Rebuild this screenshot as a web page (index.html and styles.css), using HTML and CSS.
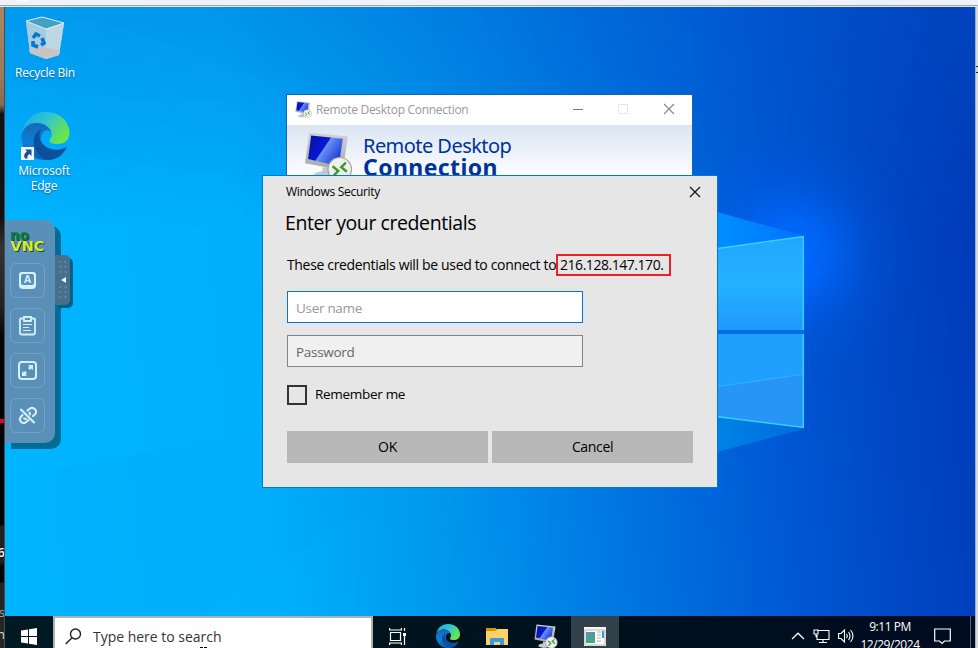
FILE: index.html
```html
<!DOCTYPE html>
<html lang="en">
<head>
<meta charset="utf-8">
<title>Remote desktop</title>
<link rel="stylesheet" href="styles.css">
</head>
<body>
<svg width="0" height="0" class="defs">
  <defs>
    <linearGradient id="edgeBlue" x1="0" y1="0" x2="0" y2="1"><stop offset="0" stop-color="#1767b5"/><stop offset=".5" stop-color="#0b80d8"/><stop offset="1" stop-color="#095fae"/></linearGradient>
    <linearGradient id="edgeTop" x1="0" y1="0" x2="1" y2=".5"><stop offset="0" stop-color="#1aa7e8"/><stop offset=".5" stop-color="#2fc5d4"/><stop offset="1" stop-color="#6be44a"/></linearGradient>
    <linearGradient id="screen" x1="0" y1="0" x2="1" y2=".6"><stop offset="0" stop-color="#0910a0"/><stop offset=".5" stop-color="#0618d4"/><stop offset=".53" stop-color="#6c90f4"/><stop offset="1" stop-color="#1838d8"/></linearGradient>
    <linearGradient id="metal" x1="0" y1="0" x2="0" y2="1"><stop offset="0" stop-color="#d0d4d6"/><stop offset="1" stop-color="#a4a8ab"/></linearGradient>
    <symbol id="edge" viewBox="0 0 48 48">
      <path d="M1 21C2 8 12 0 24 0C38 0 48 9 48 21C48 29 42 32 36 32C31 32 28 31 28 29C28 27 31 25 30 21C28 14 21 11 15 11C8 11 2 16 1 21Z" fill="url(#edgeTop)"/>
      <path d="M0 23C2 15 8 11 15 11C22 11 29 15 30 21C29 18 25 17 22 20C17 26 20 36 30 42C34 44 39 44 42 41C37 46 31 48 24 48C10 48-1 37 0 23Z" fill="url(#edgeBlue)"/>
      <path d="M20 17C11 21 9 34 18 43C21 46 25 48 28 48C36 47 42 42 45 36C45 35 44 35 43 36C33 41 19 35 18 25C18 22 18 20 20 17Z" fill="#0c509d"/>
    </symbol>
    <symbol id="rdp" viewBox="0 0 48 48">
      <path d="M18 34L30 34L32 43Q22 50 9 44Q8 39 18 38Z" fill="#c3c8cb"/>
      <path d="M5 0L43 4L38 37L1 30Z" fill="url(#metal)"/>
      <path d="M7 3L38 6L34 33L4 26Z" fill="url(#screen)"/>
      <circle cx="35" cy="36" r="11.5" fill="#eff0ee" stroke="#a2a5a3" stroke-width="1.2"/>
      <path d="M28 33L33.500 37.500L29 42.500M41 29.500L36.500 34L42 38.500" fill="none" stroke="#3a9b28" stroke-width="2.4"/>
    </symbol>
  </defs>
</svg>
<div class="frame">
  <div class="top-strip"><span class="pill"></span></div>
  <div class="left-strip"><i class="mark"></i><span class="l1">6</span><span class="l2">s</span><span class="l3">n</span></div>
  <main class="desktop">
    <svg class="wallpaper" viewBox="5 7 970 641" width="970" height="641" preserveAspectRatio="none">
      <defs>
        <linearGradient id="base" gradientUnits="userSpaceOnUse" x1="5" y1="330" x2="975" y2="240">
          <stop offset="0" stop-color="#00b5ff"/><stop offset=".25" stop-color="#00b0fd"/><stop offset=".45" stop-color="#0094ed"/><stop offset=".62" stop-color="#0074e0"/><stop offset=".78" stop-color="#0058d5"/><stop offset=".9" stop-color="#0047c4"/><stop offset="1" stop-color="#003bb8"/>
        </linearGradient>
        <linearGradient id="shade" gradientUnits="userSpaceOnUse" x1="0" y1="7" x2="0" y2="230"><stop offset="0" stop-color="#0058c8" stop-opacity=".3"/><stop offset="1" stop-color="#0058c8" stop-opacity="0"/></linearGradient>
        <radialGradient id="glow" gradientUnits="userSpaceOnUse" cx="790" cy="255" r="125"><stop offset="0" stop-color="#006dff"/><stop offset=".3" stop-color="#0066fa" stop-opacity=".8"/><stop offset=".65" stop-color="#005eea" stop-opacity=".25"/><stop offset="1" stop-color="#0058e0" stop-opacity="0"/></radialGradient>
        <linearGradient id="pane1" x1="0" y1="0" x2="0" y2="1"><stop offset="0" stop-color="#22a6ff"/><stop offset=".52" stop-color="#23b2ff"/><stop offset="1" stop-color="#1e98fc"/></linearGradient>
        <linearGradient id="beam" gradientUnits="userSpaceOnUse" x1="710" y1="0" x2="804" y2="0"><stop offset="0" stop-color="#0090ff"/><stop offset="1" stop-color="#0074ff"/></linearGradient>
        <linearGradient id="beam2" gradientUnits="userSpaceOnUse" x1="710" y1="0" x2="804" y2="0"><stop offset="0" stop-color="#0084e6"/><stop offset="1" stop-color="#006ade"/></linearGradient>
      </defs>
      <rect x="5" y="7" width="970" height="641" fill="url(#base)"/>
      <rect x="5" y="7" width="970" height="223" fill="url(#shade)"/>
      <path d="M5 7L60 7L310 96L640 176L300 176Z" fill="#13a3f7" opacity=".12"/>
      <path d="M5 480L263 430V488L400 488L200 616H5Z" fill="#0097e2" opacity=".07"/>
      <circle cx="790" cy="255" r="125" fill="url(#glow)"/>
      <path d="M600 176L717 212L804 236L717 249L600 270Z" fill="url(#beam)"/>
      <path d="M650 400L717 416L804 429L717 452L650 475Z" fill="url(#beam2)"/>
      <path d="M700 251L804 236V330H700Z" fill="url(#pane1)"/>
      <path d="M700 330H804V334H700Z" fill="#006fe6"/>
      <path d="M700 334H804V428L700 414Z" fill="#219fff"/>
      <path d="M700 389L804 374V428L700 414Z" fill="#2695f5"/>
      <path d="M700 389L804 374" stroke="#28b5ff" stroke-width="1.2"/>
      <path d="M700 251L803.3 236.5V330M803.3 334V427.5L700 414.5" fill="none" stroke="#37d0fa" stroke-width="1.5"/>
    </svg>

    <div class="shortcut bin">
      <svg width="40" height="44" viewBox="0 0 40 44">
        <path d="M1 5L17 1L39 7L34 39L21 43L5 37Z" fill="#a9d2e6" opacity=".95"/>
        <path d="M1 5L17 1L39 7L21 13Z" fill="#449fc5"/>
        <path d="M1 5L21 13L21 43L5 37Z" fill="#a3cce2"/>
        <path d="M21 13L39 7L34 39L21 43Z" fill="#bcd8e5"/>
        <path d="M4 34L17 31L35 34L34 39L21 43L5 37Z" fill="#c9c4c3"/>
        <path d="M1 5L21 13L39 7L17 1Z" fill="none" stroke="#d7edf4"/>
        <path d="M8 22L11 18L15 20M17 22L19 27L16 29M13 31L8 29L8 25" fill="none" stroke="#0876cf" stroke-width="3.6"/>
      </svg>
      <span>Recycle Bin</span>
    </div>
    <div class="shortcut edge">
      <div class="edge-art">
        <svg width="49" height="48"><use href="#edge" width="49" height="48"/></svg>
        <svg class="arrow" width="13" height="13" viewBox="0 0 13 13"><path d="M0 0H13V13H0Z" fill="#f4f4f4"/><path d="M4 2.500H10.500V9L8.500 7Q6 8 6.500 11.500H4Q1.500 7.500 6 4.500Z" fill="#1b4f93"/></svg>
      </div>
      <span>Microsoft<br>Edge</span>
    </div>

    <section class="rdc">
      <header>
        <svg width="17" height="17"><use href="#rdp" width="17" height="17"/></svg>
        <span class="rdc-title">Remote Desktop Connection</span>
        <svg class="controls" width="104" height="14" viewBox="0 0 104 14" fill="none"><path d="M1 7.500H11" stroke="#777"/><path d="M46.500 2.500H55.500V11.500H46.500Z" stroke="#e6e6e6"/><path d="M92 2L102 12M102 2L92 12" stroke="#858585" stroke-width="1.1"/></svg>
      </header>
      <div class="banner">
        <svg width="49" height="50"><use href="#rdp" width="49" height="50"/></svg>
        <div class="brand"><span>Remote Desktop</span><strong>Connection</strong></div>
      </div>
    </section>

    <section class="dialog">
      <header><span class="dlg-title">Windows Security</span><svg width="12" height="12" viewBox="0 0 12 12"><path d="M1 1L11 11M11 1L1 11" stroke="#111" stroke-width="1.2"/></svg></header>
      <h1>Enter your credentials</h1>
      <p><span class="msg">These credentials will be used to connect to</span><span class="ip">216.128.147.170.</span></p>
      <div class="field user"><span>User name</span></div>
      <div class="field pass"><span>Password</span></div>
      <label class="remember"><i></i><span>Remember me</span></label>
      <div class="buttons"><button>OK</button><button>Cancel</button></div>
    </section>

    <aside class="vnc">
      <svg class="logo" width="37" height="25" viewBox="0 0 37 25">
        <text class="no" x="0" y="9.500" textLength="19" lengthAdjust="spacingAndGlyphs">no</text>
        <text class="name" x="0.500" y="21" textLength="34" lengthAdjust="spacingAndGlyphs">VNC</text>
      </svg>
      <div class="tool"><svg width="19" height="19" viewBox="0 0 19 19"><path d="M4 1H15Q18 1 18 4V14Q18 18 14 18H5Q1 18 1 14V4Q1 1 4 1ZM5 3Q3 3 3 5V12Q3 14 5 14H14Q16 14 16 12V5Q16 3 14 3Z" fill="#d4f0ff" fill-rule="evenodd"/><text x="9.500" y="12.200" text-anchor="middle" font-family="Liberation Sans" font-weight="bold" font-size="10.500" fill="#d4f0ff">A</text></svg></div>
      <div class="tool"><svg width="19" height="21" viewBox="0 0 19 21" fill="none" stroke="#d4f0ff"><path d="M6 3.500H3Q2 3.500 2 4.500V18Q2 19.500 3.500 19.500H15.500Q17 19.500 17 18V4.500Q17 3.500 16 3.500H13" stroke-width="1.8"/><path d="M6 2H13V6H6Z" stroke-width="1.8"/><path d="M5 9.500H14M5 12.500H11M5 15.500H13"/></svg></div>
      <div class="tool"><svg width="19" height="19" viewBox="0 0 19 19" fill="none" stroke="#d4f0ff"><rect x="1" y="1" width="17" height="17" rx="3" stroke-width="2"/><path d="M10 4H15V9L13.500 7.500L12 9L10 7L11.500 5.500ZM4 10L5.500 11.500L7 10L9 12L7.500 13.500L9 15H4Z" fill="#d4f0ff" stroke="none"/></svg></div>
      <div class="tool"><svg width="20" height="20" viewBox="0 0 20 20" fill="none" stroke="#d4f0ff" stroke-width="2.100" stroke-linecap="round"><path d="M3 3.500L16 16.500"/><path d="M9.500 4.500L12 2.500Q14.500.8 17 3.200Q19.300 5.800 17 8.200L15 10M12 8.500L11.500 6.500M4.500 9L2.800 11Q.8 13.500 3.200 16Q5.800 18.200 8.200 16L10.500 14M6 12.500L8 13"/></svg></div>
      <div class="handle"><svg width="15" height="50" viewBox="0 0 15 50"><path d="M5.500 6V46M10.500 6V46" stroke="#65869f" stroke-width="2" stroke-dasharray="2 3"/><path d="M4 20H13V30H4Z" fill="#47708c"/><path d="M6 25L11 22V28Z" fill="#e2f4ff"/></svg></div>
    </aside>

    <nav class="taskbar">
      <div class="start"><svg width="17" height="17" viewBox="0 0 17 17" fill="#fff"><path d="M0 2.500L7 1.500V8H0ZM8 1.300L16 0V8H8ZM0 9H7V15.500L0 14.500ZM8 9H16V17L8 15.700Z"/></svg></div>
      <div class="search"><svg width="17" height="17" viewBox="0 0 17 17" fill="none" stroke="#222" stroke-width="1.400"><circle cx="10.500" cy="6" r="5"/><path d="M7 9.700L.7 16"/></svg><span>Type here to search</span><i class="caret"></i></div>
      <div class="task view"><svg width="17" height="17" viewBox="0 0 17 17" fill="none" stroke="#fff" stroke-width="1.200"><path d="M1.500 4.500H11.500V12.500H1.500ZM.6 0V2H12.400V0M.6 17V15H12.400V17M15.500 0V3M15.500 8V17"/><path d="M14 5H17V8H14Z" fill="#fff" stroke="none"/></svg></div>
      <div class="task"><svg width="24" height="24"><use href="#edge" width="24" height="24"/></svg></div>
      <div class="task files"><svg width="22" height="19" viewBox="0 0 22 19"><path d="M0 1H10L11 4H0Z" fill="#d99600"/><path d="M0 4H9L11 2H22V18H0Z" fill="#ffd165"/><path d="M4 18V12Q4 11 5 11H17Q18 11 18 12V18H14V15H8V18Z" fill="#3b99df"/></svg></div>
      <div class="task remote"><svg width="24" height="25"><use href="#rdp" width="24" height="25"/></svg></div>
      <div class="task active"><svg width="22" height="19" viewBox="0 0 22 19"><path d="M0 0H22V19H0Z" fill="#f5f5f4"/><path d="M1 3H21V18H1Z" fill="#fff" stroke="#b5b8ba"/><path d="M2 5H11V16H2Z" fill="#4aa587"/><path d="M2 5H11V9Q7 9 2 14Z" fill="#5399a8"/><path d="M13 5H17M13 8H17M13 11H17M13 14H17" stroke="#c8caca" stroke-width="1.500"/><path d="M19 4V11" stroke="#278ad2" stroke-width="1.800"/></svg></div>
      <div class="tray">
        <svg width="14" height="8" viewBox="0 0 14 8"><path d="M1 7L7 1.200L13 7" fill="none" stroke="#fff" stroke-width="1.300"/></svg>
        <svg class="net" width="17" height="15" viewBox="0 0 17 15" fill="none" stroke="#fff" stroke-width="1.100"><path d="M5 1.500H16V10.500H4V6M10 10.500V13.500M6 13.500H14M1 1H5V5H1ZM3 5V8"/></svg>
        <svg class="sound" width="17" height="14" viewBox="0 0 17 14" fill="none" stroke="#fff" stroke-width="1.100"><path d="M.6 4.500H3L6.500 1V13L3 9.500H.6ZM8.500 5Q10 7 8.500 9M10.500 3Q13.500 7 10.500 11M12.500 1Q17.500 7 12.500 13"/></svg>
        <div class="clock"><span>9:11 PM</span><span class="date">12/29/2024</span></div>
        <svg class="note" width="17" height="17" viewBox="0 0 17 17" fill="none" stroke="#fff" stroke-width="1.200"><path d="M.7 1H16.300V13H10.500L8 15.500L5.500 13H.7Z"/></svg>
        <i class="peek"></i>
      </div>
    </nav>
  </main>
  <div class="right-strip"><span class="r1">c</span></div>
</div>
</body>
</html>
```
FILE: styles.css
```css
* { box-sizing: border-box; }
body { margin: 0; overflow: hidden; font-family: "Open Sans", "Noto Sans", sans-serif; font-size: 14px; color: #000; }
svg { display: block; flex: none; }
.defs { position: absolute; }
i { display: block; }
.frame { width: 978px; height: 648px; display: grid; grid-template: 7px 641px / 5px 970px 3px; overflow: hidden; }
.top-strip { grid-column: 1 / -1; background: #edf2fb; border-bottom: 1px solid #dde6ee; box-shadow: inset 0 -1px #a7a7a9; }
.pill { display: block; width: 10px; height: 1px; margin-left: 17px; background: #fff; }
.left-strip { position: relative; overflow: hidden; background: linear-gradient(#a98762 0, #9c7a58 70px, #8b6a4d 98px, #111 107px, #111 210px, #333 240px, #222 300px, #050505 330px, #030303 518px, #202020 519px, #202020 555px, #050505 560px, #050505 575px, #252525 576px); border-right: 1px solid #4a4a4a; color: #aaa; font-size: 13px; line-height: 16px; }
.left-strip span { position: absolute; right: -1px; }
.left-strip .l1 { top: 537px; color: #eee; font-weight: 600; }
.l2 { top: 597px; }
.l3 { top: 619px; color: #ddd; }
.mark { height: 4px; margin-top: 412px; background: #e8002c; }
.right-strip { overflow: hidden; background: #d6d7d9; border-left: 1px solid #9bb0d8; }
.r1 { display: block; margin: 52px 0 0 -3px; font-size: 13px; color: #222; }
.desktop { position: relative; overflow: hidden; }
.wallpaper { position: absolute; inset: 0; }

.shortcut { position: absolute; display: flex; flex-direction: column; align-items: center; width: 76px; color: #fff; font-size: 12px; line-height: 15px; text-align: center; text-shadow: 0 1px 2px #0a5c9a; }
.bin { left: 2px; top: 9px; }
.bin span { margin-top: 5px; letter-spacing: -.25px; }
.edge { left: 1px; top: 105px; }
.edge span { margin-top: 3px; letter-spacing: -.15px; }
.edge-art { position: relative; margin-left: 3px; }
.arrow { position: absolute; left: 0; bottom: 0; }

.rdc { position: absolute; left: 281px; top: 87px; width: 407px; height: 90px; border: 1px solid #1861ac; background: #fff; overflow: hidden; }
.rdc header { height: 30px; display: flex; align-items: center; padding: 0 16px 2px 8px; color: #999; font-size: 12px; }
.rdc-title { margin-left: 4px; letter-spacing: -.3px; }
.controls { margin-left: auto; }
.banner { display: flex; height: 60px; padding: 7px 0 0 17px; background: linear-gradient(#dbe5f3, #fff 55px); }
.brand { display: flex; flex-direction: column; margin: 3px 0 0 10px; color: #003399; font-family: "Noto Sans", sans-serif; font-size: 20px; line-height: 21px; white-space: nowrap; letter-spacing: -.55px; }
.brand strong { font-size: 23px; line-height: 22px; letter-spacing: .4px; }

.dialog { position: absolute; left: 257px; top: 168px; width: 456px; height: 313px; padding: 0 23px 0 24px; border: 1px solid #0078d7; background: #e6e6e6; }
.dialog header { display: flex; justify-content: space-between; align-items: center; height: 31px; margin-right: -7px; margin-left: -1px; font-size: 12px; }
.dlg-title { letter-spacing: -.3px; }
.dialog h1 { margin: 0 0 0 -2px; height: 33px; line-height: 31px; font-size: 19.5px; font-weight: 400; white-space: nowrap; letter-spacing: -.42px; }
.dialog p { display: flex; align-items: center; margin: 14px 0 15px; height: 22px; line-height: 22px; font-size: 14px; white-space: nowrap; }
.msg { width: 269px; letter-spacing: -.34px; }
.ip { width: 115px; height: 22px; line-height: 18px; padding-left: 2px; border: 2px solid #ed2024; letter-spacing: -.46px; }
.field { width: 296px; height: 32px; margin-bottom: 12px; padding: 2px 8px 0; line-height: 28px; border: 1px solid #858585; background: #f0f0f0; color: #666; font-size: 13.5px; letter-spacing: -.3px; }
.user { border-color: #0078d7; background: #fff; color: #999; }
.remember { display: flex; align-items: center; gap: 8px; height: 20px; margin-top: 18px; line-height: 18px; font-size: 13.5px; letter-spacing: -.3px; }
.remember span { margin-top: -2px; }
.remember i { width: 20px; height: 20px; border: 2px solid #333; }
.buttons { display: grid; grid-template-columns: 201px 201px; gap: 4px; margin-top: 26px; }
button { height: 32px; padding: 0 0 1px; border: 0; background: #b8b8b8; font: inherit; letter-spacing: -.35px; }

.vnc { position: absolute; left: 0; top: 213px; width: 50px; height: 223px; padding: 10px 0 0 5px; background: #5a90b7; border-radius: 0 10px 10px 0; box-shadow: 6px 6px 0 #006d99; }
.tool { display: flex; align-items: center; justify-content: center; width: 35px; height: 35px; margin-bottom: 10px; border: 1px solid #76a3c4; border-radius: 6px; }
.logo { margin-bottom: 8px; overflow: visible; font-family: "DejaVu Sans", sans-serif; font-weight: bold; filter: drop-shadow(1px 1px 0 #23463a); }
.no { font-size: 14px; fill: #08813d; }
.name { font-size: 13.5px; fill: #d5ed1d; }
.handle { position: absolute; left: 50px; top: 35px; width: 15px; height: 50px; background: #47708c; border-radius: 0 5px 5px 0; box-shadow: 3px 3px 0 #006086; }

.taskbar { position: absolute; left: 0; right: 0; top: 609px; height: 40px; display: flex; background: linear-gradient(90deg, #001923, #00121d 55%, #000b20); color: #fff; }
.start { width: 48px; display: flex; align-items: center; justify-content: center; }
.search { position: relative; width: 320px; display: flex; align-items: center; padding-left: 10px; border: 2px solid #b0b0b0; background: #fff; color: #333; font-size: 14px; }
.search span { margin-left: 11px; letter-spacing: -.02px; }
.caret { position: absolute; left: 145px; top: 29px; width: 7px; height: 1px; background: linear-gradient(90deg, #000 3px, #fff 3px 4px, #000 4px); }
.task { width: 48px; display: flex; align-items: center; justify-content: center; }
.view { width: 51px; padding-right: 3px; }
.files { width: 49px; }
.remote { width: 50px; }
.active { background: #33414b; }
.tray { display: flex; align-items: center; margin-left: auto; width: 184px; }
.net { margin-left: 8px; }
.sound { margin-left: 8px; }
.clock { display: flex; flex-direction: column; align-items: center; width: 60px; margin: -1px 0 0 5px; font-size: 12px; line-height: 18px; letter-spacing: -.45px; }
.note { margin-left: 14px; }
.peek { width: 1px; height: 40px; margin-left: 19px; background: #5c6870; }
```
